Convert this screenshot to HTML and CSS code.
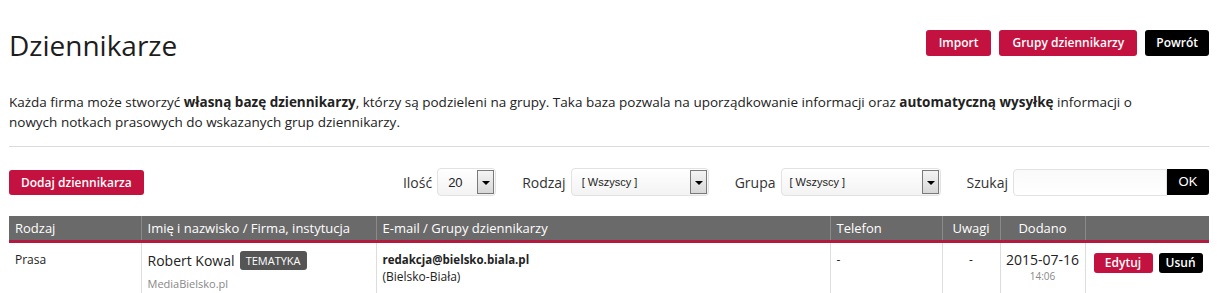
FILE: index.html
```html
<!DOCTYPE html>
<html lang="pl">
<head>
<meta charset="utf-8">
<title>Dziennikarze</title>
<link rel="stylesheet" href="styles.css">
</head>
<body>
<div class="page">
  <div class="top">
    <h1 class="title">Dziennikarze</h1>
    <div class="top-actions">
      <a class="btn btn-red">Import</a>
      <a class="btn btn-red">Grupy dziennikarzy</a>
      <a class="btn btn-black btn-back">Powrót</a>
    </div>
  </div>
  <p class="intro">Każda firma może stworzyć <b>własną bazę dziennikarzy</b>, którzy są podzieleni na grupy. Taka baza pozwala na uporządkowanie informacji oraz <b>automatyczną wysyłkę</b> informacji o nowych notkach prasowych do wskazanych grup dziennikarzy.</p>
  <div class="rule"></div>
  <div class="toolbar">
    <a class="btn btn-red btn-add">Dodaj dziennikarza</a>
    <div class="filters">
      <label class="flt">Ilość <span class="sel sel-num"><span class="sel-val">20</span><span class="sel-arrow"></span></span></label>
      <label class="flt">Rodzaj <span class="sel sel-mid"><span class="sel-val">[ Wszyscy ]</span><span class="sel-arrow"></span></span></label>
      <label class="flt">Grupa <span class="sel sel-wide"><span class="sel-val">[ Wszyscy ]</span><span class="sel-arrow"></span></span></label>
      <label class="flt">Szukaj <span class="search"><span class="search-input"></span><span class="btn-ok">OK</span></span></label>
    </div>
  </div>
  <table class="list">
    <colgroup>
      <col class="c1"><col class="c2"><col class="c3"><col class="c4"><col class="c5"><col class="c6"><col class="c7">
    </colgroup>
    <thead>
      <tr>
        <th>Rodzaj</th>
        <th>Imię i nazwisko / Firma, instytucja</th>
        <th>E-mail / Grupy dziennikarzy</th>
        <th>Telefon</th>
        <th class="center">Uwagi</th>
        <th class="center">Dodano</th>
        <th></th>
      </tr>
    </thead>
    <tbody>
      <tr>
        <td class="small">Prasa</td>
        <td><span class="name">Robert Kowal</span> <span class="tag">TEMATYKA</span><div class="sub">MediaBielsko.pl</div></td>
        <td><b class="mail">redakcja@bielsko.biala.pl</b><div class="small">(Bielsko-Biała)</div></td>
        <td class="small">-</td>
        <td class="center small">-</td>
        <td class="center datecell"><span class="date">2015-07-16</span><div class="time">14:06</div></td>
        <td class="acts"><a class="btn btn-red btn-sm btn-edit">Edytuj</a><a class="btn btn-black btn-sm">Usuń</a></td>
      </tr>
    </tbody>
  </table>
</div>
</body>
</html>
```

FILE: styles.css
```css
* { box-sizing: border-box; }
html, body { margin: 0; padding: 0; background: #fff; }
body {
  font-family: "Open Sans", "Liberation Sans", sans-serif;
  color: #222;
  font-size: 13px;
}
.page { padding: 0 8px 0 9px; }

.top {
  display: flex;
  justify-content: space-between;
  align-items: flex-start;
  padding-top: 26px;
}
.title {
  margin: 0;
  font-weight: 400;
  font-size: 28px;
  line-height: 38px;
  color: #1d1d1d;
}
.top-actions { display: flex; gap: 8px; padding-top: 4px; }

.btn {
  display: inline-block;
  font-family: "Open Sans", sans-serif;
  font-weight: 600;
  font-size: 12px;
  color: #fff;
  border-radius: 3px;
  padding: 0 13px;
  height: 26px;
  line-height: 26px;
  text-decoration: none;
  white-space: nowrap;
}
.btn-red { background: #c3123f; }
.btn-black { background: #000; }
.btn-back { padding: 0 11px; }

.intro {
  margin: 28px 0 0;
  font-size: 13.5px;
  line-height: 20px;
  padding-right: 50px;
}
.intro b { font-weight: 700; }

.rule { height: 1px; background: #dcdcdc; margin-top: 14px; }

.toolbar {
  display: flex;
  justify-content: space-between;
  align-items: center;
  margin-top: 21px;
}
.btn-add { height: 25px; line-height: 25px; padding: 0 12px; }

.filters { display: flex; align-items: center; gap: 26px; }
.flt {
  display: flex;
  align-items: center;
  gap: 5px;
  font-size: 14px;
  color: #333;
}
.sel {
  display: flex;
  align-items: center;
  justify-content: space-between;
  height: 28px;
  border: 1px solid #e2e2e2;
  border-radius: 4px;
  background: linear-gradient(#fff, #f3f3f3);
  padding: 0 1px 0 8px;
  font-family: "Liberation Sans", Arial, sans-serif;
  font-size: 11px;
  color: #222;
}
.sel-num { width: 59px; font-size: 13px; padding-left: 10px; }
.sel-mid { width: 138px; padding-left: 10px; }
.sel-wide { width: 160px; }
.sel-arrow {
  width: 17px;
  height: 24px;
  border: 1px solid #7a7a7a;
  background: linear-gradient(#f4f4f4, #d8d8d8);
  position: relative;
}
.sel-arrow::after {
  content: "";
  position: absolute;
  left: 4px;
  top: 10px;
  border-left: 4px solid transparent;
  border-right: 4px solid transparent;
  border-top: 4px solid #000;
}
.search { display: flex; align-items: center; }
.search-input {
  width: 154px;
  height: 27px;
  border: 1px solid #e2e2e2;
  border-radius: 4px 0 0 4px;
  background: linear-gradient(#fafafa, #fff);
}
.btn-ok {
  width: 42px;
  height: 26px;
  line-height: 26px;
  background: #000;
  color: #fff;
  text-align: center;
  border-radius: 0 3px 3px 0;
  font-family: "Liberation Sans", Arial, sans-serif;
  font-size: 13px;
}

.list {
  width: 100%;
  border-collapse: collapse;
  margin-top: 20px;
  table-layout: fixed;
}
.c1 { width: 132px; }
.c2 { width: 235px; }
.c3 { width: 454px; }
.c4 { width: 112px; }
.c5 { width: 58px; }
.c6 { width: 85px; }
.c7 { width: auto; }
.list th {
  background: #6a6a6a;
  color: #fff;
  font-weight: 400;
  font-size: 13px;
  text-align: left;
  height: 25px;
  padding: 0 6px;
  border-left: 1px solid #8a8a8a;
  border-bottom: 3px solid #b31a40;
}
.list th:first-child { border-left: none; }
.list td {
  vertical-align: top;
  padding: 8px 6px 8px;
  border-left: 1px solid #ddd;
  font-size: 12px;
  line-height: 17px;
  height: 60px;
}
.list td:first-child { border-left: none; }
.center { text-align: center !important; }
.small { font-size: 12px; }
.name { font-size: 14px; color: #222; }
.tag {
  display: inline-block;
  background: #555;
  color: #fff;
  font-size: 11px;
  font-weight: 400;
  border-radius: 3px;
  padding: 0 6px;
  height: 19px;
  line-height: 19px;
  margin-left: 2px;
  vertical-align: 1px;
}
.sub { color: #888; font-size: 11px; margin-top: 5px; }
.mail { font-weight: 700; font-size: 11.5px; }
.datecell { padding-left: 2px !important; padding-right: 2px !important; white-space: nowrap; }
.date { font-size: 14px; }
.time { color: #888; font-size: 10px; line-height: 14px; }
.acts { padding-top: 10px !important; padding-left: 8px !important; white-space: nowrap; }
.btn-sm { height: 20px; line-height: 20px; padding: 0 7px; font-size: 12px; margin-right: 6px; text-align: center; }
.btn-sm:last-child { margin-right: 0; }
.btn-edit { min-width: 59px; }
```
